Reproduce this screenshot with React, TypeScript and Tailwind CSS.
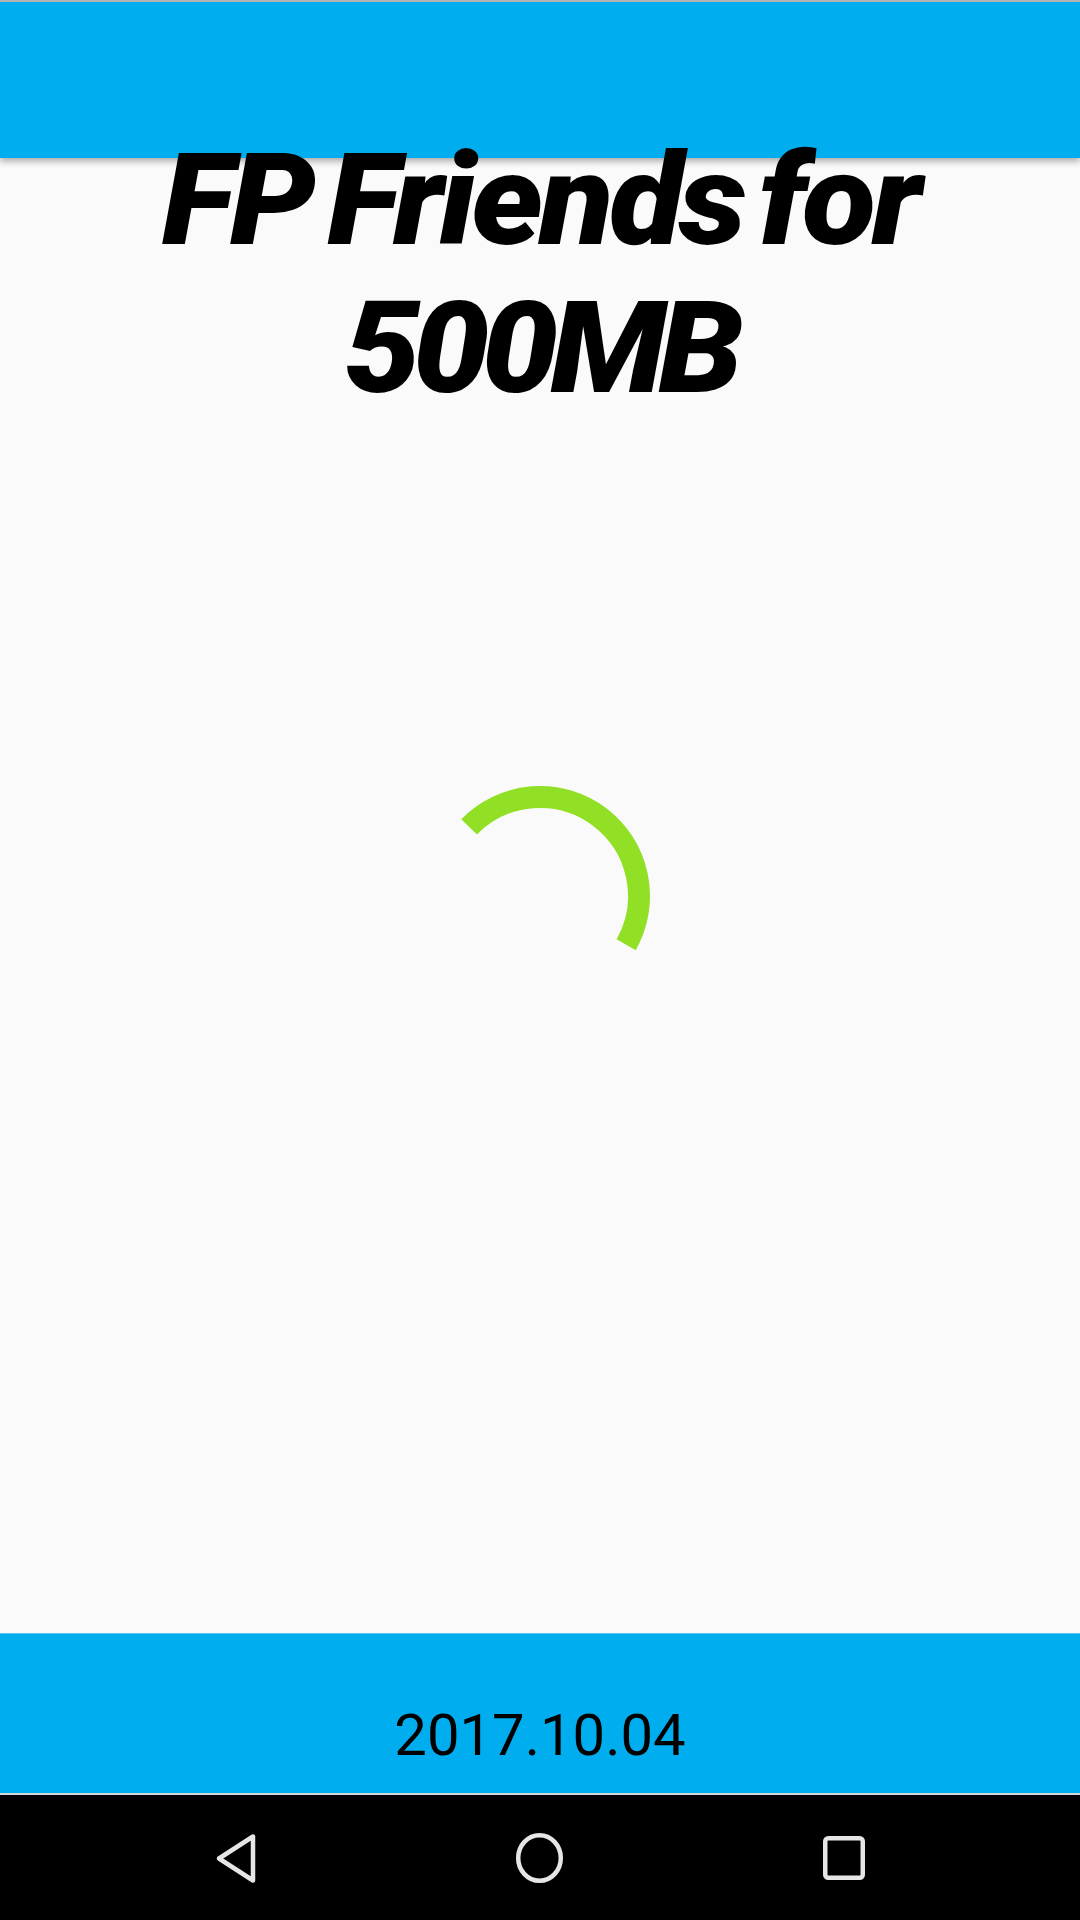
const ARC_START = -135.7;
const ARC_END = 29.5;

function arcPath(cx: number, cy: number, r: number, from: number, to: number) {
    const rad = (d: number) => (d * Math.PI) / 180;
    const x1 = cx + r * Math.cos(rad(from));
    const y1 = cy + r * Math.sin(rad(from));
    const x2 = cx + r * Math.cos(rad(to));
    const y2 = cy + r * Math.sin(rad(to));
    const large = to - from > 180 ? 1 : 0;
    return `M ${x1} ${y1} A ${r} ${r} 0 ${large} 1 ${x2} ${y2}`;
}

function Spinner() {
    return (
        <svg width="220" height="220" viewBox="0 0 220 220">
            <path d={arcPath(110, 110, 99, ARC_START, ARC_END)} fill="none" stroke="#92e026" strokeWidth="22" />
        </svg>
    );
}

function NavBar() {
    return (
        <div className="flex h-[125px] items-center justify-center bg-black">
            <div className="flex">
                <div className="flex w-[304px] justify-center">
                    <svg width="56" height="56" viewBox="0 0 56 56">
                        <path d="M45 6.5 L45 50.5 L11 28.5 Z" fill="none" stroke="#e6e6e6" strokeWidth="4.5" strokeLinejoin="round" />
                    </svg>
                </div>
                <div className="flex w-[304px] justify-center">
                    <svg width="56" height="56" viewBox="0 0 56 56">
                        <ellipse cx="27.5" cy="28" rx="21.3" ry="22.8" fill="none" stroke="#e6e6e6" strokeWidth="4.5" />
                    </svg>
                </div>
                <div className="flex w-[304px] justify-center">
                    <svg width="56" height="56" viewBox="0 0 56 56">
                        <rect x="9.25" y="8.25" width="37.5" height="39.5" rx="3" fill="none" stroke="#e6e6e6" strokeWidth="4.5" />
                    </svg>
                </div>
            </div>
        </div>
    );
}

export default function App() {
    return (
        <div className="flex h-[1920px] w-[1080px] flex-col bg-[#fafafa]" style={{ fontFamily: 'Roboto, "Noto Sans", sans-serif' }}>
            <header className="relative h-[158px] shrink-0 border-t-[2px] border-[#b4b4b4] bg-[#00aeef] shadow-[0_3px_7px_rgba(0,0,0,0.35)]" />

            <main className="grid flex-1 grid-cols-1 grid-rows-1">
                <h1 className="relative z-10 col-start-1 row-start-1 -mt-[32px] scale-x-[1.06] self-start text-center text-[128px] font-black italic leading-[148px] tracking-[-0.03em] [word-spacing:-0.1em] text-black">
                    FP Friends for
                    <br />
                    <span className="tracking-[-0.055em]">500MB</span>
                </h1>
                <div className="col-start-1 row-start-1 flex items-center justify-center">
                    <Spinner />
                </div>
            </main>

            <footer className="flex h-[160px] shrink-0 flex-col justify-end border-t border-[#5cc8f2] bg-[#00aeef] pb-[29px]">
                <p className="text-center text-[58px] leading-[58px] text-black">2017.10.04</p>
            </footer>
            <div className="h-[2px] bg-[#d6d6d6]" />
            <NavBar />
        </div>
    );
}
